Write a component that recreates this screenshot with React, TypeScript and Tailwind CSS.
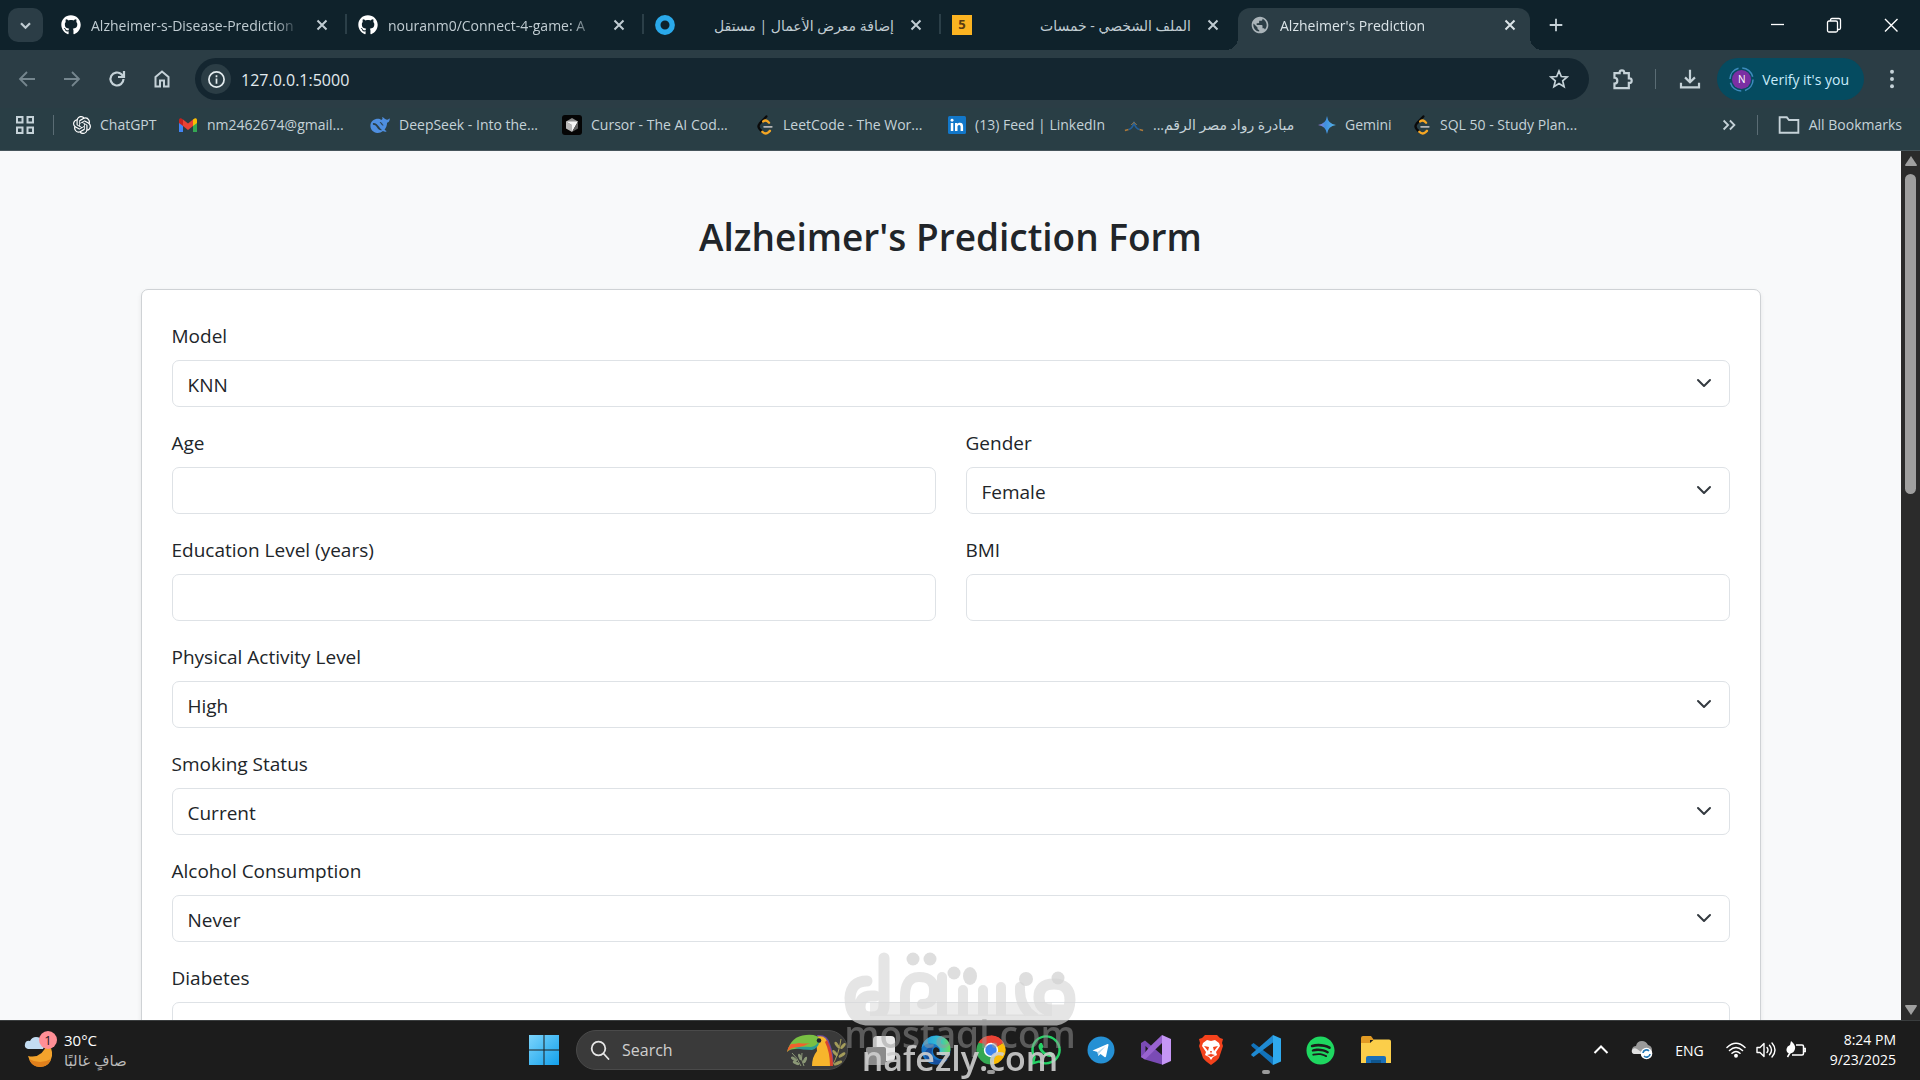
import React from "react";
import { FaGithub, FaWhatsapp, FaSpotify } from "react-icons/fa";
import { SiOpenai } from "react-icons/si";
import { MdPublic } from "react-icons/md";

type IconProps = { className?: string };

/* ---------- browser icons ---------- */

const Cross = ({ className = "size-4" }: IconProps) => (
  <svg viewBox="0 0 16 16" className={className} stroke="currentColor" strokeWidth="2" fill="none">
    <path d="M3.5 3.5l9 9M12.5 3.5l-9 9" />
  </svg>
);

const Ring = () => (
  <svg viewBox="0 0 20 20" className="size-5">
    <circle cx="10" cy="10" r="7.2" fill="none" stroke="#2aa9ea" strokeWidth="5.4" />
  </svg>
);

const Five = () => (
  <span className="flex size-5 items-center justify-center bg-[#fbb321] text-[13px] font-bold text-[#5a3c12]">5</span>
);

const Gmail = () => (
  <svg viewBox="0 0 20 16" className="h-4 w-5">
    <path d="M1 3v12h4V7z" fill="#4285f4" />
    <path d="M19 3v12h-4V7z" fill="#34a853" />
    <path d="M15 2.5L17 1.2Q19 .8 19 3v3l-4 3z" fill="#fbbc04" />
    <path d="M5 2.5L3 1.2Q1 .8 1 3v3l4 3z" fill="#c5221f" />
    <path d="M5 2.5l5 4 5-4V9l-5 4-5-4z" fill="#ea4335" />
  </svg>
);

const Whale = () => (
  <svg viewBox="0 0 24 20" className="h-[18px] w-5" fill="#4f8fe0">
    <path d="M23.5 2.2c-.4-.2-.7.2-1 .5-1.200 1.500-2.900 1-4.200.2-.9-.5-1.500-1.700-2.900-2.300-.6-.2-.9.2-.6.8.6 1.500-.2 2.300-1.300 2.500C12.300 2.600 9.800 2 7 2.700 2.900 3.600.500 7 .500 11c0 4.600 3.600 8.400 8.200 8.600 2.800.1 5-.7 6.800-2.300 1.500.8 3.300.8 4 .4.5-.3.300-.6-.1-.8-1-.4-1.600-.8-1.900-1.300 2-2.500 2.800-4.900 3-8.300 2-.4 3.100-2.200 3.200-4.400 0-.4 0-.6-.2-.7z" />
    <path d="M3.500 7.500c4 0 6 2.500 7.600 5 1 1.600 2 2.900 3.400 3.600-2.400.9-4.500-.7-5.800-2.700C7.300 11.200 6 9.700 3.500 9.800zM11.500 6.500c2-.8 4.500 1.200 4.500 4.300-.8.2-1.500-.3-2-1" fill="#2b3f47" />
    <path d="M13 7.200c1.200-.4 2.300.8 2.200 2" fill="none" stroke="#4f8fe0" strokeWidth="1" />
  </svg>
);

const CursorLogo = () => (
  <svg viewBox="0 0 20 20" className="size-5">
    <rect width="20" height="20" rx="3" fill="#050505" />
    <path d="M10 3l6 3.500-6 3.500-6-3.500z" fill="#8d8d8d" />
    <path d="M4 6.500l6 3.500v7l-6-3.500z" fill="#b9b9b9" />
    <path d="M4 6.500h12L10 17v-7z" fill="#f4f4f4" />
    <path d="M16 6.500v7l-6 3.500z" fill="#5e5e5e" />
  </svg>
);

const Leet = () => (
  <svg viewBox="0 0 20 22" className="h-5 w-[18px]" fill="none" strokeLinecap="round">
    <path d="M11.500 1.500L4 9.500q-2.500 3 0 6l2 2" stroke="#0a0a0a" strokeWidth="2.600" />
    <path d="M8 7q2.500-2 5 0l1.500 1.500M7 18.500q3.500 3.500 7 .500l1.500-1.500" stroke="#f5a623" strokeWidth="2.600" />
    <path d="M9 13h8.500" stroke="#b5b5b5" strokeWidth="2" />
  </svg>
);

const LinkedIn = () => (
  <svg viewBox="0 0 18 18" className="size-[18px]">
    <rect width="18" height="18" rx="1.500" fill="#1277c9" />
    <path d="M2.800 7h2.500v8H2.800zM7 7h2.400v1.100c.5-.8 1.300-1.300 2.500-1.300 2.500 0 3.200 1.600 3.200 3.900V15h-2.500v-3.900c0-1-.2-2-1.500-2s-1.600 1-1.600 2V15H7z" fill="#fff" />
    <circle cx="4.050" cy="4.200" r="1.450" fill="#fff" />
  </svg>
);

const Pioneers = () => (
  <svg viewBox="0 0 22 18" className="h-[18px] w-5" fill="none">
    <path d="M1 15l4-1M17 14l4 1" stroke="#b07a3a" strokeWidth="1.600" />
    <path d="M5 14q4-1 6-7 2 6 6 7" stroke="#23609c" strokeWidth="1.800" />
    <path d="M8 9l3-3 3 3" stroke="#a8834c" strokeWidth="1" />
  </svg>
);

const Gemini = () => (
  <svg viewBox="0 0 18 18" className="size-[18px]">
    <defs>
      <linearGradient id="gemini" x1="0" x2="1">
        <stop offset="0" stopColor="#a179d8" />
        <stop offset=".4" stopColor="#3f8fe0" />
        <stop offset="1" stopColor="#58b6e8" />
      </linearGradient>
    </defs>
    <path d="M9 0q1 8 9 9-8 1-9 9-1-8-9-9 8-1 9-9z" fill="url(#gemini)" />
  </svg>
);

const Stroke = ({ d, className, width = 2 }: { d: string; className: string; width?: number }) => (
  <svg viewBox="0 0 20 20" className={className} fill="none" stroke="currentColor" strokeWidth={width}>
    <path d={d} />
  </svg>
);

const AppsGrid = () => (
  <svg viewBox="0 0 20 20" className="size-5" fill="none" stroke="currentColor" strokeWidth="2">
    <rect x="2" y="2" width="5.500" height="5.500" />
    <rect x="12.500" y="2" width="5.500" height="5.500" />
    <rect x="2" y="12.500" width="5.500" height="5.500" />
    <rect x="12.500" y="12.500" width="5.500" height="5.500" />
  </svg>
);

/* ---------- browser chrome ---------- */

const tabs: { title: string; icon: React.ReactNode; rtl?: boolean; active?: boolean; rule?: boolean }[] = [
  { title: "Alzheimer-s-Disease-Prediction", icon: <FaGithub className="size-5 shrink-0 text-white" />, rule: true },
  { title: "nouranm0/Connect-4-game: A", icon: <FaGithub className="size-5 shrink-0 text-white" />, rule: true },
  { title: "إضافة معرض الأعمال | مستقل", icon: <Ring />, rtl: true, rule: true },
  { title: "الملف الشخصي - خمسات", icon: <Five />, rtl: true },
  { title: "Alzheimer's Prediction", icon: <MdPublic className="size-5 text-[#aab4b9]" />, active: true },
];

function TabStrip() {
  return (
    <div className="flex h-[50px] shrink-0 items-end bg-[#0f222b] pl-2 text-[#c0ccd2]">
      <button aria-label="Search tabs" className="mb-2 flex h-[34px] w-[35px] shrink-0 items-center justify-center rounded-[10px] bg-[#2b3d46]">
        <Stroke d="M4 7l6 6 6-6" className="size-[15px]" width={3} />
      </button>
      <div role="tablist" className="ml-[7px] flex min-w-0">
        {tabs.map((t) => (
          <div
            key={t.title}
            role="tab"
            aria-selected={!!t.active}
            className={
              t.active
                ? "relative flex h-[42px] w-[292px] items-center gap-[10px] rounded-t-[12px] bg-[#2b3d45] pr-3 pb-2 pl-[12px] text-[#dbe4e8] before:absolute before:bottom-0 before:-left-3 before:size-3 before:bg-[radial-gradient(circle_at_0_0,transparent_12px,#2b3d45_12px)] after:absolute after:-right-3 after:bottom-0 after:size-3 after:bg-[radial-gradient(circle_at_100%_0,transparent_12px,#2b3d45_12px)]"
                : "relative flex h-[42px] w-[297px] items-center gap-[10px] pr-[17px] pb-2 pl-[11px]"
            }
          >
            {t.icon}
            <span
              dir={t.rtl ? "rtl" : "ltr"}
              className="min-w-0 flex-1 overflow-hidden pt-[2px] text-[14px] leading-5 whitespace-nowrap ltr:[mask-image:linear-gradient(to_right,#000_88%,transparent)]"
            >
              {t.title}
            </span>
            <button aria-label="Close tab" className="ml-1">
              <Cross />
            </button>
            {t.rule && <span className="absolute top-[6px] right-0 h-5 w-[2px] bg-[#2b3f48]" />}
          </div>
        ))}
      </div>
      <button aria-label="New tab" className="mb-4 ml-[17px] text-[#c6d2d8]">
        <Stroke d="M10 3v14M3 10h14" className="size-[18px]" />
      </button>
      <div className="ml-auto flex h-[50px] items-center text-white">
        <button aria-label="Minimize" className="flex w-[57px] justify-center">
          <Stroke d="M4 9.500h13" className="size-5" width={1.3} />
        </button>
        <button aria-label="Restore" className="flex w-[57px] justify-center">
          <svg viewBox="0 0 20 20" className="size-5" fill="none" stroke="currentColor" strokeWidth="1.300">
            <rect x="3.500" y="6" width="10" height="11" rx="1.500" />
            <path d="M6.500 6V5q0-1.500 1.500-1.500h7q1.500 0 1.500 1.500v8q0 1.500-1.500 1.500h-1.500" />
          </svg>
        </button>
        <button aria-label="Close window" className="flex w-[58px] justify-center">
          <Stroke d="M4 4l12.500 12.500M16.500 4L4 16.500" className="size-5" width={1.4} />
        </button>
      </div>
    </div>
  );
}

function Toolbar() {
  return (
    <div className="flex h-[58px] shrink-0 items-center bg-[#2b3d45] pr-[17px] pl-[17px] text-[#c5d2d8]">
      <div className="flex w-[178px] shrink-0 gap-[25px]">
        <button aria-label="Back" className="text-[#75868e]">
          <Stroke d="M18 10H3M10 3l-7 7 7 7" className="size-5" width={1.8} />
        </button>
        <button aria-label="Forward" className="text-[#75868e]">
          <Stroke d="M2 10h15M10 3l7 7-7 7" className="size-5" width={1.8} />
        </button>
        <button aria-label="Reload">
          <svg viewBox="0 0 20 20" className="size-5" fill="none" stroke="currentColor" strokeWidth="2.200">
            <path d="M16.500 10a6.500 6.500 0 1 1-2-4.700L16 7" />
            <path d="M17 2v6h-6" />
          </svg>
        </button>
        <button aria-label="Home">
          <Stroke d="M3.500 17.500V8L10 2.500 16.500 8v9.500h-4.500v-6H8v6z" className="size-5" />
        </button>
      </div>
      <div className="flex h-[42px] min-w-0 flex-1 items-center rounded-full bg-[#142630] pr-5 pl-[6px]">
        <button aria-label="Site information" className="flex size-[30px] shrink-0 items-center justify-center rounded-full bg-[#2b3d45] text-[#e3ebee]">
          <svg viewBox="0 0 20 20" className="size-[19px]" fill="none" stroke="currentColor" strokeWidth="1.800">
            <circle cx="10" cy="10" r="8" />
            <path d="M10 9v5.500M10 5.500v2" />
          </svg>
        </button>
        <input aria-label="Address" defaultValue="127.0.0.1:5000" className="ml-[10px] min-w-0 flex-1 bg-transparent pt-[2px] text-[16px] leading-6 text-[#e2eaee] outline-none" />
        <button aria-label="Bookmark this page">
          <Stroke d="M10 2l2.300 5.500 5.900.5-4.500 3.900 1.400 5.800L10 14.600l-5.100 3.100 1.400-5.800L1.800 8l5.900-.5z" className="size-5" width={1.7} />
        </button>
      </div>
      <button aria-label="Extensions" className="ml-[22px]">
        <Stroke d="M3 4.500h4.500V4a2 2 0 0 1 4 0v.5H15.500V9h.5a2 2 0 0 1 0 4h-.5v4.500H3V13.500a2.500 2.500 0 0 0 0-5z" className="size-[23px]" width={1.9} />
      </button>
      <span className="ml-[21px] h-5 w-px bg-[#5a6c74]" />
      <button aria-label="Downloads" className="ml-[23px]">
        <Stroke d="M10 1.500v11M5.500 8.500l4.500 4.500 4.500-4.500M1.800 13.500v4.200h16.400v-4.200" className="size-[22px]" />
      </button>
      <button className="ml-4 flex h-[42px] items-center gap-2 rounded-full bg-[#054b60] pr-[15px] pl-3 text-[14px] text-[#c9ebfb]">
        <span className="relative flex size-[25px] items-center justify-center">
          <svg viewBox="0 0 26 26" className="absolute inset-0 size-full" fill="none" stroke="#3d8bbd" strokeWidth="1.600">
            <circle cx="13" cy="13" r="12" strokeDasharray="15 4" />
          </svg>
          <span className="flex size-[19px] items-center justify-center rounded-full bg-[#7b2fa3] text-[10px] text-white">N</span>
        </span>
        Verify it's you
      </button>
      <button aria-label="Menu" className="ml-[17px]">
        <svg viewBox="0 0 20 20" className="size-[22px]" fill="currentColor">
          <circle cx="10" cy="3.500" r="1.800" />
          <circle cx="10" cy="10" r="1.800" />
          <circle cx="10" cy="16.500" r="1.800" />
        </svg>
      </button>
    </div>
  );
}

const bookmarks: { label: string; icon: React.ReactNode; width: string; rtl?: boolean }[] = [
  { label: "ChatGPT", icon: <SiOpenai className="size-[18px] text-white" />, width: "w-[105px]" },
  { label: "nm2462674@gmail...", icon: <Gmail />, width: "w-[192px]" },
  { label: "DeepSeek - Into the...", icon: <Whale />, width: "w-[192px]" },
  { label: "Cursor - The AI Cod...", icon: <CursorLogo />, width: "w-[194px]" },
  { label: "LeetCode - The Wor...", icon: <Leet />, width: "w-[192px]" },
  { label: "(13) Feed | LinkedIn", icon: <LinkedIn />, width: "w-[176px]" },
  { label: "مبادرة رواد مصر الرقم...", icon: <Pioneers />, width: "w-[194px]", rtl: true },
  { label: "Gemini", icon: <Gemini />, width: "w-[95px]" },
  { label: "SQL 50 - Study Plan...", icon: <Leet />, width: "w-[192px]" },
];

function BookmarksBar() {
  return (
    <nav aria-label="Bookmarks" className="flex h-[43px] shrink-0 items-center border-b border-[#46555b] bg-[#293e45] pr-[18px] pb-2 pl-[15px] text-[14px] leading-5 text-[#c5d2d8]">
      <button aria-label="Apps">
        <AppsGrid />
      </button>
      <span className="mr-[19px] ml-[18px] h-5 w-px shrink-0 bg-[#5a6c74]" />
      {bookmarks.map((b) => (
        <a key={b.label} href="#" className={`${b.width} flex shrink-0 items-center gap-[9px] whitespace-nowrap`}>
          <span className="shrink-0">{b.icon}</span>
          <span dir={b.rtl ? "rtl" : "ltr"}>{b.label}</span>
        </a>
      ))}
      <button aria-label="More bookmarks" className="ml-auto">
        <Stroke d="M4 5l5 5-5 5M11 5l5 5-5 5" className="size-[18px]" />
      </button>
      <span className="ml-[19px] h-5 w-px bg-[#5a6c74]" />
      <button className="ml-5 flex items-center gap-[9px] whitespace-nowrap">
        <Stroke d="M1.500 17V3H8l2 2.500h8.500V17z" className="size-[22px]" width={1.7} />
        All Bookmarks
      </button>
    </nav>
  );
}

/* ---------- form ---------- */

const controlClass = "h-[47px] w-full rounded-[7px] border border-[#dee2e6] bg-white px-[15px] pt-[3px] text-[19px] text-[#212529] outline-none";

function Field({ id, label, children }: { id: string; label: string; children: React.ReactNode }) {
  return (
    <div className="mb-5 flex min-w-0 flex-1 flex-col gap-[9px]">
      <label htmlFor={id} className="pt-px text-[19px] leading-[30px]">
        {label}
      </label>
      {children}
    </div>
  );
}

function SelectField({ id, label, options }: { id: string; label: string; options: string[] }) {
  return (
    <Field id={id} label={label}>
      <div className="relative">
        <select id={id} className={`${controlClass} appearance-none pr-12`}>
          {options.map((o) => (
            <option key={o}>{o}</option>
          ))}
        </select>
        <svg viewBox="0 0 16 16" className="pointer-events-none absolute top-[15px] right-[18px] size-4" fill="none" stroke="#343a40" strokeWidth="2" strokeLinecap="round" strokeLinejoin="round">
          <path d="M2 5l6 6 6-6" />
        </svg>
      </div>
    </Field>
  );
}

function NumberField({ id, label }: { id: string; label: string }) {
  return (
    <Field id={id} label={label}>
      <input id={id} type="number" className={controlClass} />
    </Field>
  );
}

function PredictionForm() {
  return (
    <main className="min-w-0 flex-1 overflow-hidden bg-[#f8f9fa] px-6 pt-[62px] text-[#212529]">
      <h1 className="mb-7 text-center text-[37px] leading-[48px] font-semibold">Alzheimer's Prediction Form</h1>
      <form className="mx-auto max-w-[1620px] rounded-[7px] border border-[#cfd2d5] bg-white p-[30px] shadow-[0_2px_5px_rgba(0,0,0,0.075)]">
        <SelectField id="model" label="Model" options={["KNN", "SVM", "Random Forest"]} />
        <div className="flex gap-[30px]">
          <NumberField id="age" label="Age" />
          <SelectField id="gender" label="Gender" options={["Female", "Male"]} />
        </div>
        <div className="flex gap-[30px]">
          <NumberField id="education" label="Education Level (years)" />
          <NumberField id="bmi" label="BMI" />
        </div>
        <SelectField id="activity" label="Physical Activity Level" options={["High", "Medium", "Low"]} />
        <SelectField id="smoking" label="Smoking Status" options={["Current", "Former", "Never"]} />
        <SelectField id="alcohol" label="Alcohol Consumption" options={["Never", "Occasionally", "Regularly"]} />
        <SelectField id="diabetes" label="Diabetes" options={["No", "Yes"]} />
      </form>
    </main>
  );
}

function ScrollBar() {
  return (
    <div className="flex w-[19px] shrink-0 flex-col items-center bg-[#2b2b2b] py-[5px]">
      <svg viewBox="0 0 12 10" className="h-[10px] w-3" fill="#9f9f9f">
        <path d="M6 0l6 9q0 1-1 1H1q-1 0-1-1z" />
      </svg>
      <div className="mt-[8px] min-h-0 w-full flex-1">
        <div className="mx-auto h-5/13 w-[11px] rounded-full bg-[#9f9f9f]" />
      </div>
      <svg viewBox="0 0 12 10" className="h-[10px] w-3" fill="#9f9f9f">
        <path d="M6 10L0 1q0-1 1-1h10q1 0 1 1z" />
      </svg>
    </div>
  );
}

/* ---------- taskbar ---------- */

const WeatherIcon = () => (
  <svg viewBox="0 0 34 38" className="h-[38px] w-[34px]">
    <path d="M4 25q14 3 19-12 6 4 5 12-2 11-12 11-9 0-12-11z" fill="#f3a32c" />
    <path d="M5 28q11 6 22 0-3 8-11 8t-11-8z" fill="#e0801c" />
    <path d="M4 18q-4-1-3-5t5-3q2-4 6-4 5 0 6 5 4 2 1 7z" fill="#c3dcf2" />
    <circle cx="24" cy="9" r="9" fill="#ff8f96" />
    <text x="24" y="14" textAnchor="middle" fontSize="13" fill="#26191a">1</text>
  </svg>
);

const WindowsLogo = () => (
  <svg viewBox="0 0 30 30" className="size-[30px]">
    <defs>
      <linearGradient id="win" x1="0" y1="0" x2="1" y2="1">
        <stop offset="0" stopColor="#7cd4fb" />
        <stop offset="1" stopColor="#12a0ec" />
      </linearGradient>
    </defs>
    <path d="M0 0h14.500v14.500H0zM15.500 0H30v14.500H15.500zM0 15.500h14.500V30H0zM15.500 15.500H30V30H15.500z" fill="url(#win)" />
  </svg>
);

const Toucan = () => (
  <svg viewBox="0 0 60 36" className="h-9 w-[60px]">
    <g stroke="#8d9a78" strokeWidth="1" fill="#8d9a78">
      <path d="M14 34Q10 25 5 21M17 34q-4-7-2-13" fill="none" />
      <ellipse cx="7" cy="27" rx="3" ry="1" transform="rotate(35 7 27)" />
      <ellipse cx="9" cy="31" rx="3" ry="1" transform="rotate(25 9 31)" />
      <ellipse cx="13" cy="25" rx="3" ry="1" transform="rotate(70 13 25)" />
      <ellipse cx="18" cy="28" rx="3" ry="1" transform="rotate(-65 18 28)" />
    </g>
    <g stroke="#a79f5c" strokeWidth="1" fill="#a79f5c">
      <path d="M45 34q7-12 9-27" fill="none" />
      <ellipse cx="50" cy="13" rx="3.200" ry="1" transform="rotate(55 50 13)" />
      <ellipse cx="56" cy="14" rx="3.200" ry="1" transform="rotate(-50 56 14)" />
      <ellipse cx="48" cy="21" rx="3.200" ry="1" transform="rotate(50 48 21)" />
      <ellipse cx="55" cy="23" rx="3.500" ry="1" transform="rotate(-35 55 23)" />
      <ellipse cx="51" cy="31" rx="4" ry="1.200" transform="rotate(-25 51 31)" />
    </g>
    <path d="M30 3q11-1 13 9 4 10 3 22H40z" fill="#6a4aa0" />
    <path d="M29 5q10-3 12 7 4 10 4 22H25q0-9 5-15z" fill="#f7b52c" />
    <path d="M38 10q5 10 5 24h3Q46 20 40 8z" fill="#d8452e" />
    <path d="M0 20Q4 4 19 3q12-1 14 5 0 7-7 8-11 0-18 1-5 0-8 3z" fill="#79c043" />
    <path d="M0 20Q1 15 4 12q5 0 8-1 5 1 11 0-5 3-11 4-8 0-12 5z" fill="#f0612d" />
    <path d="M7 16q9-2 17-1 6-1 8-6-1 8-7 9-9 0-18-2z" fill="#2b9b95" />
    <circle cx="32" cy="8.500" r="2.300" fill="#1d2430" />
  </svg>
);

const TaskView = () => (
  <svg viewBox="0 0 30 30" className="size-[30px]">
    <rect x="7" y="1" width="22" height="25" rx="4" fill="#e8e8e8" />
    <rect x="0" y="12" width="20" height="18" rx="2" fill="#8b8b8b" />
  </svg>
);

const Edge = () => (
  <svg viewBox="0 0 30 30" className="size-[30px]">
    <defs>
      <linearGradient id="edgeTop" x1="0" x2="1">
        <stop offset="0" stopColor="#2495de" />
        <stop offset=".6" stopColor="#35bfd2" />
        <stop offset="1" stopColor="#6bdc58" />
      </linearGradient>
    </defs>
    <circle cx="15" cy="15" r="14.500" fill="#1874c4" />
    <path d="M.500 14C2-3 29-4 29.500 14c0 6-8 8-11 5-1-1 2-2 0-6C15 7 3 7 .500 14z" fill="url(#edgeTop)" />
    <path d="M11 15c-2 7 3 13 16 9-5 7-17 7-22-1-3-6 1-11 8-12-1 1-2 2-2 4z" fill="#164f9e" />
    <path d="M18.500 19c3 3 8 1 10-1l-1.500 6c-8 2-15-2-15-8 0-3 3-5 5-3 3 3 0 4.500 1.500 6z" fill="#1c1c1c" />
  </svg>
);

const Chrome = () => (
  <svg viewBox="0 0 30 30" className="size-[30px]">
    <path d="M15 15L2.400 7.700A14.500 14.500 0 0 1 27.600 7.700z" fill="#ea4335" />
    <path d="M15 15L27.600 7.700A14.500 14.500 0 0 1 15 29.500z" fill="#fbbc05" />
    <path d="M15 15v14.500A14.500 14.500 0 0 1 2.400 7.700z" fill="#34a853" />
    <path d="M15 8h12.700q-5-7.500-12.700-7.500L13 6z" fill="#ea4335" />
    <path d="M9 18.500L2.400 7.700l6 1zM21 18.500L15 29.500l-1-7z" fill="#34a853" />
    <circle cx="15" cy="15" r="7.200" fill="#fff" />
    <circle cx="15" cy="15" r="5.700" fill="#3b82ec" />
  </svg>
);

const Telegram = () => (
  <svg viewBox="0 0 28 28" className="size-7">
    <circle cx="14" cy="14" r="13.500" fill="#2590d4" />
    <path d="M5.500 14.500L20.500 8q1.200-.3 1 1l-2.500 11.500q-.5 1-1.500.4l-4-3-2.200 2.200-.8-4z" fill="#fff" />
    <path d="M10.500 16l8.300-6-6.300 7-1.200 3z" fill="#b8d9ee" />
  </svg>
);

const VisualStudio = () => (
  <svg viewBox="0 0 30 30" className="size-[30px]">
    <path d="M0 8l4-2.500L21 20v9.500L4 24.500 0 22zM4.500 11v8l4-4z" fill="#7a4bb5" fillRule="evenodd" />
    <path d="M0 22l4 2.500L21 8V0L9 11.500z" fill="#9863cf" />
    <path d="M21 0l9 4v22l-9 4z" fill="#c596f5" />
  </svg>
);

const Brave = () => (
  <svg viewBox="0 0 26 30" className="h-[30px] w-[26px]">
    <path d="M7 0h12l3 3 3 1-1 4 1 3-4 12q-2 3-8 7-6-4-8-7L1 11l1-3-1-4 3-1z" fill="#f4421c" />
    <path d="M5 8l4-3 4 1 4-1 4 3 1 3-4 6 1 3-4 2-2 3-2-3-4-2 1-3-4-6z" fill="#fff" />
    <path d="M6 11l5 1-1 4zM20 11l-5 1 1 4zM12 16h2l-1 3zM9 20l4-1 4 1-4 2z" fill="#f4421c" />
  </svg>
);

const VsCode = () => (
  <svg viewBox="0 0 30 30" className="size-[30px]">
    <path d="M0 10l2.500-2L22 22.500V30L1 11.500z" fill="#1273bb" />
    <path d="M0 20l2.500 2L22 7.500V0L1 18.500z" fill="#1f8ad2" />
    <path d="M22 0l8 3.500v23L22 30z" fill="#2fa9ee" />
  </svg>
);

const Explorer = () => (
  <svg viewBox="0 0 30 28" className="h-7 w-[30px]">
    <path d="M0 2q0-2 2-2h8l3 4h-4v8H0z" fill="#e29b24" />
    <path d="M0 7h9l4-3.500h15q2 0 2 2V27H0z" fill="#fbce4a" />
    <path d="M5 27v-5q0-2 2-2h16q2 0 2 2v5z" fill="#1a6fb8" />
    <path d="M10 24h10v3H10z" fill="#0f568f" />
  </svg>
);

const apps: { name: string; icon: React.ReactNode; running?: boolean }[] = [
  { name: "Task view", icon: <TaskView /> },
  { name: "Edge", icon: <Edge /> },
  { name: "Chrome", icon: <Chrome />, running: true },
  { name: "WhatsApp", icon: <FaWhatsapp className="size-[34px] text-[#25d366]" /> },
  { name: "Telegram", icon: <Telegram /> },
  { name: "Visual Studio", icon: <VisualStudio /> },
  { name: "Brave", icon: <Brave /> },
  { name: "VS Code", icon: <VsCode />, running: true },
  { name: "Spotify", icon: <FaSpotify className="size-[29px] text-[#1ed760]" /> },
  { name: "File Explorer", icon: <Explorer /> },
];

function Taskbar() {
  return (
    <footer className="flex h-[60px] shrink-0 items-center border-t border-[#3a3d3e] bg-[#1c1c1c] pr-6 pb-px text-[15px] text-white">
      <button className="flex w-[529px] items-center gap-[6px] pl-6 text-left leading-5">
        <WeatherIcon />
        <span>
          <span className="block">30°C</span>
          <span className="block text-[#b9b9b9]" dir="rtl">
            صافٍ غالبًا
          </span>
        </span>
      </button>
      <button aria-label="Start">
        <WindowsLogo />
      </button>
      <label className="ml-[17px] flex h-10 w-[272px] items-center rounded-full border border-[#4a4a4a] bg-[#3a3a3a] pl-[13px]">
        <svg viewBox="0 0 20 20" className="size-5 shrink-0" fill="none" stroke="#e6e6e6" strokeWidth="1.800" strokeLinecap="round">
          <circle cx="8.500" cy="8.500" r="6.800" />
          <path d="M13.500 13.500l5 5.500" />
        </svg>
        <input aria-label="Search" placeholder="Search" className="ml-3 min-w-0 flex-1 bg-transparent text-[16px] outline-none placeholder:text-[#cfcfcf]" />
        <Toucan />
      </label>
      <div className="ml-[5px] flex">
        {apps.map((a) => (
          <button key={a.name} aria-label={a.name} className="relative flex h-[58px] w-[55px] items-center justify-center">
            {a.icon}
            {a.running && <span className="absolute bottom-[5px] h-1 w-2 rounded-full bg-[#9a9a9a]" />}
          </button>
        ))}
      </div>
      <div className="ml-auto flex items-center">
        <button aria-label="Show hidden icons">
          <Stroke d="M3.500 13L10 6.500l6.500 6.500" className="size-5" width={2} />
        </button>
        <svg viewBox="0 0 22 20" className="ml-5 h-5 w-[22px]">
          <path d="M4 14q-4-1-3-5 1-3 4-3 1-5 6-5 4 0 6 4 4 1 4 5 0 4-4 4z" fill="#9a9a9a" />
          <path d="M3 14q-3-1-2-4 2-3 5-1l7 5z" fill="#e0e0e0" />
          <circle cx="15.500" cy="13.500" r="5.800" fill="#fff" />
          <path d="M12 13a3.500 3.500 0 0 1 6-2M19 14a3.500 3.500 0 0 1-6 2" stroke="#2378b5" strokeWidth="1.700" fill="none" />
        </svg>
        <button className="ml-[22px] text-[14px]">ENG</button>
        <button aria-label="Network, sound and battery" className="ml-[22px] flex items-center gap-[10px]">
          <svg viewBox="0 0 20 16" className="h-4 w-5" fill="none" stroke="#fff" strokeWidth="1.500" strokeLinecap="round">
            <path d="M1 5.500q9-8.500 18 0M3.500 8.500q6.500-6 13 0M6 11.300q4-3.500 8 0" />
            <circle cx="10" cy="13.800" r="1.200" fill="#fff" />
          </svg>
          <svg viewBox="0 0 20 16" className="h-4 w-5" fill="none" stroke="#fff" strokeWidth="1.400" strokeLinecap="round" strokeLinejoin="round">
            <path d="M1 5.500h3l4-4v13l-4-4H1zM11 5.500q2 2.500 0 5M13.500 3.200q4 4.800 0 9.600M16 1q6 7 0 14" />
          </svg>
          <svg viewBox="0 0 20 18" className="h-[18px] w-5" fill="none" stroke="#fff" strokeWidth="1.500">
            <path d="M10 4h6q1.500 0 1.500 1.500v7q0 1.500-1.500 1.500H6M18 7.500h1.200v3H18" />
            <path d="M5 0q5 4 4 8-1 4-5 4.500Q0 12 .500 8 1 5 4 4zM4 12L2 16.500" fill="#fff" stroke="none" />
            <path d="M5 10l-3.500 6" />
          </svg>
        </button>
        <div className="ml-6 text-right text-[14px] leading-5">
          <div>8:24 PM</div>
          <div>9/23/2025</div>
        </div>
      </div>
    </footer>
  );
}

/* Overlaid site marks, anchored to the bottom centre of the screen. */
function Watermark() {
  return (
    <div aria-hidden="true" className="pointer-events-none absolute inset-x-0 bottom-0 flex justify-center">
      <svg viewBox="0 0 260 135" className="h-[135px] w-[260px]">
        <path d="M40 64h182" fill="none" stroke="#d9d9d9" strokeWidth="14" opacity=".5" />
        <g fill="none" stroke="#d9d9d9" strokeLinecap="round" strokeLinejoin="round" opacity=".68">
          <path d="M54 13V60q0 12-13 12-11 0-11-10 0-11 11-11h4M37 36Q21 36 20 53q0 20 16 22h190q13-2 14-20 0-16-16-16t-15 15q1 12 15 11h14" strokeWidth="11" />
          <path d="M75 73V55q-1-23 14-23 16 0 15 15 0 12-12 12M112 32v42M133 45v28M153 45v28M171 42v30M190 42q-1 20 14 30" strokeWidth="10" />
        </g>
        <g fill="#d2d2d2" opacity=".72">
          <circle cx="83" cy="14" r="6.500" />
          <circle cx="100" cy="14" r="6.500" />
          <circle cx="124" cy="28" r="6.500" />
          <ellipse cx="140" cy="31" rx="7" ry="9" />
          <circle cx="196" cy="34" r="7" />
          <circle cx="228" cy="33" r="6.500" />
        </g>
        <text x="130" y="103" textAnchor="middle" fontSize="37" fontWeight="600" fill="#9a9a9a" opacity=".5" fontFamily="Open Sans, sans-serif">
          mostaql.com
        </text>
        <text x="130" y="126" textAnchor="middle" fontSize="34" fontWeight="600" fill="#cfcfcf" opacity=".9" fontFamily="Open Sans, sans-serif">
          nafezly.com
        </text>
      </svg>
    </div>
  );
}

export default function App() {
  return (
    <div className="relative flex h-screen flex-col overflow-hidden font-['Open_Sans','Noto_Sans','DejaVu_Sans',sans-serif]">
      <TabStrip />
      <Toolbar />
      <BookmarksBar />
      <div className="flex min-h-0 flex-1">
        <PredictionForm />
        <ScrollBar />
      </div>
      <Taskbar />
      <Watermark />
    </div>
  );
}
